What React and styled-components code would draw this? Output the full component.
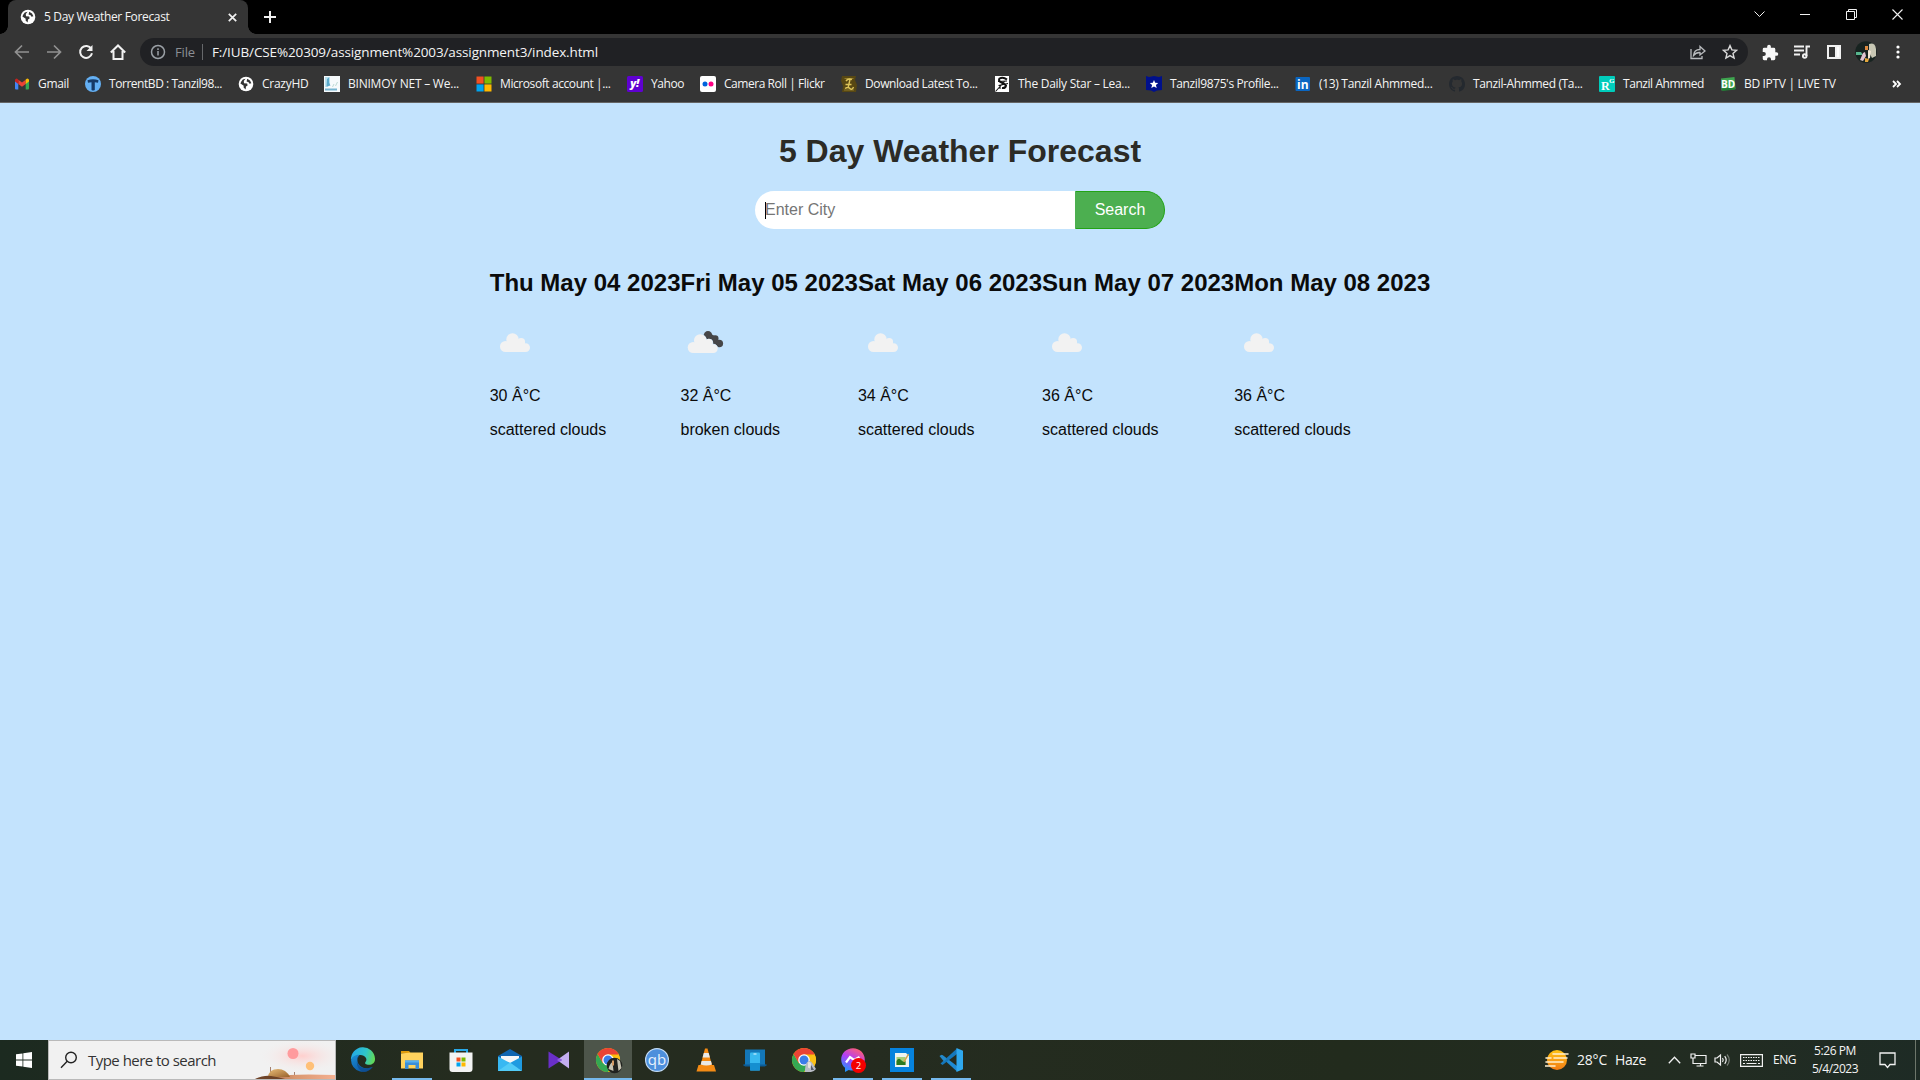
import React, { useLayoutEffect, useRef, useState } from "react";
import styled, { createGlobalStyle, css } from "styled-components";

const UI_FONT = `"Open Sans", "Noto Sans", sans-serif`;
const PAGE_FONT = `"Liberation Sans", Arial, sans-serif`;

const GlobalStyle = createGlobalStyle`
  * { box-sizing: border-box; }
  body { margin: 0; overflow: hidden; background: #c3e3fd; }
`;

const Screen = styled.div`
  width: 1920px;
  height: 1080px;
  display: flex;
  flex-direction: column;
  overflow: hidden;
  font-family: ${UI_FONT};
`;

/* ---------- fitted label ---------- */
const LabelText = styled.span`
  display: inline-block;
  flex: none;
  white-space: pre;
  font-size: ${(p) => p.$size || 12}px;
  line-height: 18px;
  color: ${(p) => p.$color || "#f4f4f4"};
`;

function Label({ width, size, color, children }) {
  const ref = useRef(null);
  const [spacing, setSpacing] = useState(0);
  useLayoutEffect(() => {
    const natural = ref.current.getBoundingClientRect().width;
    setSpacing((width - natural) / children.length);
  }, [width, children]);
  return (
    <LabelText ref={ref} $size={size} $color={color} style={{ letterSpacing: `${spacing}px` }}>
      {children}
    </LabelText>
  );
}

/* ---------- browser chrome ---------- */
const TabStrip = styled.header`
  height: 34px;
  flex: none;
  display: flex;
  background: #000;
  padding-left: 8px;
`;
const Tab = styled.div`
  position: relative;
  width: 240px;
  height: 34px;
  display: flex;
  align-items: center;
  padding: 0 8px 0 12px;
  border-radius: 8px 8px 0 0;
  background: #353535;
  &::before, &::after {
    content: "";
    position: absolute;
    bottom: 0;
    width: 8px;
    height: 8px;
  }
  &::before { left: -8px; background: radial-gradient(circle at 0 0, #000 7.5px, #353535 8px); }
  &::after { right: -8px; background: radial-gradient(circle at 100% 0, #000 7.5px, #353535 8px); }
`;
const TabTitle = styled.div`
  flex: 1;
  display: flex;
  padding-left: 8px;
`;
const Cell = styled.span`
  width: ${(p) => p.$w || 32}px;
  height: ${(p) => p.$h || 34}px;
  flex: none;
  display: flex;
  align-items: center;
  justify-content: center;
`;
const NewTab = styled(Cell)`
  margin-left: 6px;
`;
const WindowControls = styled.div`
  margin-left: auto;
  display: flex;
  height: 28px;
`;
const Toolbar = styled.div`
  height: 36px;
  flex: none;
  display: flex;
  align-items: center;
  background: #353535;
  padding: 0 6px;
`;
const Omnibox = styled.div`
  width: 1608px;
  height: 28px;
  margin-left: 6px;
  display: flex;
  align-items: center;
  border-radius: 14px;
  background: #202124;
`;
const Divider = styled.i`
  width: 1px;
  height: 16px;
  margin: 0 9px 0 7px;
  background: #66686b;
`;
const OmniActions = styled.div`
  margin-left: auto;
  display: flex;
  padding-right: 2px;
`;
const ToolbarActions = styled.div`
  display: flex;
  margin-left: 6px;
`;
const BookmarkBar = styled.nav`
  height: 33px;
  flex: none;
  display: flex;
  align-items: center;
  padding: 0 8px 4px 14px;
  background: #353535;
  border-bottom: 1px solid #656565;
`;
const Bookmark = styled.a`
  width: ${(p) => p.$w}px;
  flex: none;
  display: flex;
  align-items: center;
  gap: 8px;
`;
const Favicon = styled.svg`
  width: 16px;
  height: 16px;
  flex: none;
  display: block;
`;
const More = styled.svg`
  width: 12px;
  height: 12px;
  flex: none;
  margin: 0 9px 0 auto;
`;
const glyphFont = css`
  text { font-family: ${(p) => p.$font || UI_FONT}; text-anchor: middle; }
`;
const Mark = styled(Favicon)`
  ${glyphFont}
`;

const Line = ({ w = 16, h = 16, sw = 1.6, c = "#f1f1f1", children }) => (
  <svg width={w} height={h} viewBox={`0 0 ${w} ${h}`} fill="none" stroke={c} strokeWidth={sw}>
    {children}
  </svg>
);

const Globe = () => (
  <Favicon viewBox="0 0 16 16">
    <circle cx="8" cy="8" r="7.3" fill="#fff" />
    <path d="M7.6 2.8 5.8 5 6 7.2 9.2 7.5 9.6 9.4 8 10.6 7.6 13.6 5.6 11.4 5.7 9.7 2.4 7.6 3.3 5.4 4.8 3.6z" fill="#353535" />
    <path d="M9.2 2.8 12 4.4 13.4 7.2 11.5 7.7 10.6 6.3 8.6 5.6z" fill="#353535" />
  </Favicon>
);

const favicons = {
  gmail: (
    <Favicon viewBox="0 0 16 16">
      <path d="M1 4.5 4.3 7V13.5H2a1 1 0 0 1-1-1z" fill="#4285f4" />
      <path d="M15 4.5 11.7 7v6.5H14a1 1 0 0 0 1-1z" fill="#34a853" />
      <path d="M4.3 3.8 8 6.6l3.7-2.8V8L8 10.8 4.3 8z" fill="#ea4335" />
      <path d="M1 4a1.6 1.6 0 0 1 2.6-1l.7.8V8L1 5.5z" fill="#c5221f" />
      <path d="M15 4a1.6 1.6 0 0 0-2.6-1l-.7.8V8L15 5.5z" fill="#fbbc04" />
    </Favicon>
  ),
  torrent: (
    <Favicon viewBox="0 0 16 16">
      <circle cx="8" cy="8" r="8" fill="#64b0f4" />
      <path d="M2.5 4.2Q8 2.4 13.5 4.2l-.5 2.5-3.2-.5V14q-1.6 1-3.3 0V6.2L3 6.7z" fill="#173a66" />
    </Favicon>
  ),
  globe: <Globe />,
  binimoy: (
    <Favicon viewBox="0 0 16 16">
      <path d="M0 0h16v16H0z" fill="#f6fafc" />
      <path d="M1 1h5v6l-2 4H1z" fill="#b9e0ee" />
      <path d="M3 3 5 1.500v5l1.500 3-4 1z" fill="#5ba9cb" />
      <path d="M8.500 11l1.500-3M11.500 10l2-4" stroke="#bcd9d4" />
      <path d="M1 13.5h12" stroke="#77b5d1" strokeWidth="2" />
    </Favicon>
  ),
  microsoft: (
    <Favicon viewBox="0 0 16 16">
      <path d="M.5.5h7.1v7.1H.5z" fill="#f25022" />
      <path d="M8.4.5h7.1v7.1H8.4z" fill="#7fba00" />
      <path d="M.5 8.4h7.1v7.1H.5z" fill="#00a4ef" />
      <path d="M8.4 8.4h7.1v7.1H8.4z" fill="#ffb900" />
    </Favicon>
  ),
  yahoo: (
    <Mark viewBox="0 0 16 16">
      <rect width="16" height="16" rx="1.5" fill="#5f01d1" />
      <text x="7.8" y="11.4" fontSize="11" fontWeight="800" fontStyle="italic" fill="#fff">y!</text>
    </Mark>
  ),
  flickr: (
    <Favicon viewBox="0 0 16 16">
      <rect width="16" height="16" rx="2" fill="#fff" />
      <circle cx="5" cy="8" r="2.5" fill="#0063dc" />
      <circle cx="11" cy="8" r="2.5" fill="#ff0084" />
    </Favicon>
  ),
  download: (
    <Mark viewBox="0 0 16 16" $font={`"Liberation Serif", serif`}>
      <path d="M1 0h14l-1 4 2 5-1 7H1l1-6-2-5z" fill="#574713" />
      <path d="M3.500 2.500h9M3 14h10" stroke="#8f7a2b" />
      <path d="M5 5q2-3 6-1.500M9 3.500 7 12M4 12.500q3-2 5 0t3.500-1.500M4.500 8.500h6" fill="none" stroke="#ddc45a" strokeWidth="1.400" />
    </Mark>
  ),
  daily: (
    <Favicon viewBox="0 0 16 16">
      <path d="M1 0h14v16H1z" fill="#fff" />
      <path d="M13 3.500Q9 .5 5.500 2.500 4 5 7.500 6.500t4.500 3Q11.500 12.500 8 12" fill="none" stroke="#111" strokeWidth="2" />
      <path d="M4 5.500 13 5M4.500 9.500 14 7.500M1.500 15.500 11 5M6 9v4" stroke="#111" strokeWidth="1.100" />
    </Favicon>
  ),
  badge: (
    <Favicon viewBox="0 0 16 16">
      <path d="M0 0 3 1 8 0l5 1 3-1v14l-5 .6L8 16l-3-1.4L0 14z" fill="#00108c" />
      <path d="m8 4 1.2 2.8 3 .2-2.3 2 .8 3L8 10.400 5.300 12l.8-3-2.300-2 3-.2z" fill="#fff" />
    </Favicon>
  ),
  linkedin: (
    <Mark viewBox="0 0 16 16">
      <rect x=".5" y="1" width="14.500" height="14" rx="1" fill="#0a66c2" />
      <text x="7.800" y="12.500" fontSize="12" fontWeight="700" fill="#fff">in</text>
    </Mark>
  ),
  github: (
    <Favicon viewBox="0 0 16 16">
      <path
        fill="#24292f"
        d="M8 0C3.58 0 0 3.58 0 8c0 3.54 2.29 6.53 5.47 7.59.4.07.55-.17.55-.38 0-.19-.01-.82-.01-1.49-2.01.37-2.53-.49-2.69-.94-.09-.23-.48-.94-.82-1.13-.28-.15-.68-.52-.01-.53.63-.01 1.08.58 1.23.82.72 1.21 1.87.87 2.33.66.07-.52.28-.87.51-1.07-1.78-.2-3.64-.89-3.64-3.95 0-.87.31-1.59.82-2.15-.08-.2-.36-1.02.08-2.12 0 0 .67-.21 2.2.82.64-.18 1.32-.27 2-.27s1.36.09 2 .27c1.53-1.04 2.2-.82 2.2-.82.44 1.1.16 1.92.08 2.12.51.56.82 1.27.82 2.15 0 3.07-1.87 3.75-3.65 3.95.29.25.54.73.54 1.48 0 1.07-.01 1.93-.01 2.2 0 .21.15.46.55.38A8.01 8.01 0 0 0 16 8c0-4.420-3.580-8-8-8z"
      />
    </Favicon>
  ),
  research: (
    <Mark viewBox="0 0 16 16" $font={`"Liberation Serif", serif`}>
      <rect width="16" height="16" rx="1" fill="#00ccbb" />
      <text x="6.300" y="13.500" fontSize="12" fontWeight="700" fill="#fff">R</text>
      <text x="12.700" y="6.500" fontSize="7" fontWeight="700" fill="#fff">G</text>
    </Mark>
  ),
  iptv: (
    <Mark viewBox="0 0 16 16">
      <path d="M1 2.500 14.500 1 15.500 13 1.500 14.500z" fill="#3fa650" />
      <path d="m1.500 12.500 13-1 1 2-13 1.500z" fill="#227a35" />
      <text x="8" y="12" fontSize="10" fontWeight="700" fill="#fff">BD</text>
    </Mark>
  ),
};

const bookmarks = [
  { icon: "gmail", text: "Gmail", w: 71, lw: 31 },
  { icon: "torrent", text: "TorrentBD : Tanzil98...", w: 153, lw: 113 },
  { icon: "globe", text: "CrazyHD", w: 86, lw: 46.5 },
  { icon: "binimoy", text: "BINIMOY NET – We...", w: 152, lw: 111 },
  { icon: "microsoft", text: "Microsoft account |...", w: 151, lw: 110.5 },
  { icon: "yahoo", text: "Yahoo", w: 73, lw: 33 },
  { icon: "flickr", text: "Camera Roll | Flickr", w: 141, lw: 100.5 },
  { icon: "download", text: "Download Latest To...", w: 153, lw: 112.5 },
  { icon: "daily", text: "The Daily Star – Lea...", w: 152, lw: 112 },
  { icon: "badge", text: "Tanzil9875's Profile...", w: 149, lw: 108.5 },
  { icon: "linkedin", text: "(13) Tanzil Ahmmed...", w: 154, lw: 113.5 },
  { icon: "github", text: "Tanzil-Ahmmed (Ta...", w: 150, lw: 109.5 },
  { icon: "research", text: "Tanzil Ahmmed", w: 121, lw: 81 },
  { icon: "iptv", text: "BD IPTV | LIVE TV", w: 130, lw: 91.5 },
];

/* ---------- weather page ---------- */
const Page = styled.main`
  flex: 1;
  min-height: 0;
  display: flex;
  flex-direction: column;
  align-items: center;
  background: #c3e3fd;
  font-family: ${PAGE_FONT};
  color: #0b0b0b;
`;
const Title = styled.h1`
  margin: 29px 0 21px;
  font-size: 32px;
  line-height: 38px;
  color: #2b2b26;
`;
const SearchForm = styled.form`
  display: flex;
  height: 38px;
`;
const CityField = styled.div`
  width: 320px;
  display: flex;
  align-items: center;
  padding-left: 10px;
  border-radius: 20px 0 0 20px;
  background: #fff;
  color: #757575;
  font-size: 16px;
`;
const Caret = styled.i`
  width: 1px;
  height: 17px;
  margin-right: -1px;
  background: #000;
`;
const SearchButton = styled.button`
  width: 90px;
  padding: 0;
  border: 1px solid #23a314;
  border-left-color: #4caf50;
  border-radius: 0 20px 20px 0;
  background: #4caf50;
  color: #fff;
  font: 16px ${PAGE_FONT};
`;
const Forecast = styled.section`
  display: flex;
  justify-content: center;
  margin-top: 20px;
`;
const DayHeading = styled.h2`
  margin: 20px 0;
  font-size: 24px;
  line-height: 28px;
  white-space: nowrap;
`;
const WeatherIcon = styled.svg`
  display: block;
  width: 50px;
  height: 50px;
`;
const Reading = styled.p`
  margin: 16px 0;
  font-size: 16px;
  line-height: 18px;
`;
const IconSlot = styled.div`
  height: 54px;
`;

const days = [
  { date: "Thu May 04 2023", temp: 30, sky: "scattered clouds" },
  { date: "Fri May 05 2023", temp: 32, sky: "broken clouds" },
  { date: "Sat May 06 2023", temp: 34, sky: "scattered clouds" },
  { date: "Sun May 07 2023", temp: 36, sky: "scattered clouds" },
  { date: "Mon May 08 2023", temp: 36, sky: "scattered clouds" },
];

const CloudBody = () => (
  <>
    <circle cx="15.500" cy="29.500" r="5.500" />
    <circle cx="22.500" cy="22.400" r="6.200" />
    <circle cx="31.200" cy="25" r="3.900" />
    <circle cx="35.600" cy="30.600" r="4.400" />
    <path d="M15.500 25h17l3 2v8h-20z" />
  </>
);

const Cloud = ({ broken }) => (
  <WeatherIcon viewBox="0 0 50 50">
    {broken && (
      <g fill="#464648">
        <circle cx="28" cy="18.500" r="4.400" />
        <circle cx="35.300" cy="21.500" r="3.200" />
        <circle cx="39.300" cy="26.500" r="3.800" />
        <path d="m28 16 7 3 4 5v6l-6-3-6-6z" />
      </g>
    )}
    <g transform={broken ? "translate(-2.3 1)" : undefined}>
      {broken && (
        <g fill="#c3e3fd" stroke="#c3e3fd" strokeWidth="1"><CloudBody /></g>
      )}
      <g fill="#f2f2f2"><CloudBody /></g>
    </g>
  </WeatherIcon>
);

/* ---------- taskbar ---------- */
const Taskbar = styled.footer`
  height: 40px;
  flex: none;
  display: flex;
  background: linear-gradient(90deg, #1c2a20, #252c1f 25%, #252c20 45%, #222b1d 70%, #222c22 90%, #1e2b25);
`;
const SearchBox = styled.div`
  width: 288px;
  display: flex;
  align-items: center;
  border: 1px solid #b9b9b9;
  background: #f1f1f1;
  overflow: hidden;
`;
const SearchGlyph = styled.div`
  width: 39px;
  padding-left: 11px;
  display: flex;
`;
const Scene = styled.svg`
  width: 80px;
  height: 38px;
  margin-left: auto;
`;
const Apps = styled.div`
  display: flex;
  padding-left: 2px;
`;
const AppSlot = styled.div`
  width: 49px;
  display: flex;
  justify-content: center;
`;
const AppTile = styled.div`
  width: ${(p) => (p.$active ? 48 : 40)}px;
  height: 40px;
  flex: none;
  display: flex;
  align-items: center;
  justify-content: center;
  background: ${(p) => (p.$active ? "#4d554a" : "transparent")};
  border-bottom: 2px solid ${(p) => (p.$running ? "#76b9ed" : "transparent")};
  padding-top: 2px;
`;
const AppIcon = styled.svg`
  width: 24px;
  height: 24px;
  display: block;
  overflow: visible;
  ${glyphFont}
`;
const Tray = styled.div`
  margin-left: auto;
  display: flex;
  align-items: center;
`;
const Weather = styled.div`
  display: flex;
  align-items: center;
  margin-right: 16px;
`;
const Gap = styled.span`
  width: ${(p) => p.$w}px;
`;
const Clock = styled.div`
  width: 68px;
  display: flex;
  flex-direction: column;
  align-items: center;
`;
const ShowDesktop = styled.i`
  width: 5px;
  height: 40px;
  border-left: 1px solid #6d766b;
`;

const ChromeMark = () => (
  <>
    <circle cx="12" cy="12" r="12" fill="#fbbc04" />
    <path d="M12 12 22.400 6A12 12 0 0 1 12 24z" fill="#fbc116" />
    <path d="M1.600 6A12 12 0 0 0 12 24l5.200-9L12 12 6.800 15z" fill="#34a853" />
    <path d="M12 6.500h10.700A12 12 0 0 0 1.600 6l5.200 9z" fill="#ea4335" />
    <circle cx="12" cy="12" r="5.800" fill="#fff" />
    <circle cx="12" cy="12" r="4.500" fill="#3b7de8" />
  </>
);

const apps = [
  {
    id: "edge",
    art: (
      <>
        <defs>
          <linearGradient id="edgeTop" x1="0" y1=".3" x2="1" y2=".5"><stop stopColor="#23a7e9" /><stop offset=".6" stopColor="#2fc6c8" /><stop offset="1" stopColor="#62d957" /></linearGradient>
          <linearGradient id="edgeLow" x1="0" y1="0" x2=".6" y2="1"><stop stopColor="#1b8fd8" /><stop offset="1" stopColor="#0c59a4" /></linearGradient>
        </defs>
        <path d="M0 12a12 12 0 0 1 24-1.500c.3 4-2.500 6.300-6 6.300-3.200 0-4.700-1.300-3.500-2.700 2.500-3-.5-7-5-7C5 7.100 1.500 9.500 0 12z" fill="url(#edgeTop)" />
        <path d="M0 12c1-3.500 5-6 9-5.200-3 1.600-3.200 6-1.500 9.200 2.400 4.200 8.500 5.500 14.300 2.700A12 12 0 0 1 0 12z" fill="url(#edgeLow)" />
        <path d="M9.500 7C5.500 8.500 5 14 8.500 18c3 3 8.500 3.200 13.300.7A12 12 0 0 1 12 24C6 21 3 13 9.500 7z" fill="#104a8c" opacity=".7" />
      </>
    ),
  },
  {
    id: "explorer", running: true,
    art: (
      <>
        <path d="M1 3h8l2 2.500H1z" fill="#e09b0c" />
        <path d="M1 5.500 11 4.500h12v16H1z" fill="#ffd25e" />
        <path d="M5 12.500h14V21h-3.500v-4h-7v4H5z" fill="#3b8ed8" />
        <path d="M5 12.500h14v2H5z" fill="#58b0ef" />
      </>
    ),
  },
  {
    id: "store",
    art: (
      <>
        <path d="M6 5V2h12v3" fill="none" stroke="#29a9e8" strokeWidth="2" />
        <path d="M.5 4.500h23V21a3 3 0 0 1-3 3h-17a3 3 0 0 1-3-3z" fill="#f3f3f3" />
        <path d="M7.500 9.500h4v4h-4z" fill="#f25022" /><path d="M12.500 9.500h4v4h-4z" fill="#7fba00" />
        <path d="M7.500 14.500h4v4h-4z" fill="#00a4ef" /><path d="M12.500 14.500h4v4h-4z" fill="#ffb900" />
      </>
    ),
  },
  {
    id: "mail",
    art: (
      <>
        <path d="M0 8 12 1l12 7v5H0z" fill="#0f65b0" />
        <path d="M3 8h18v4l-9 5-9-5z" fill="#f5f6f7" />
        <path d="M0 8.500 12 15 24 23H0z" fill="#38b8f2" />
        <path d="M24 8.500V23L9 13.800 12 15z" fill="#1f9ae0" />
        <path d="M0 23 12 14.500 24 23z" fill="#52cbf7" />
      </>
    ),
  },
  {
    id: "blend",
    art: (
      <>
        <path d="M22 3.500v17L10 12z" fill="#c3aef0" />
        <path d="M1.500 3.500 15 12 1.500 20.500z" fill="#6a2fc8" />
        <path d="M12.300 10.300 15 12 12.300 13.700 10 12z" fill="#8f63df" />
      </>
    ),
  },
  {
    id: "chrome", running: true, active: true,
    art: (
      <>
        <ChromeMark />
        <circle cx="18.500" cy="17.500" r="7.800" fill="#20221f" />
        <path d="M12.500 21c1-4 2-6 4-7l1 9zM21 11l3 2 1.500 7-3 3z" fill="#c6c3b3" />
        <path d="M16 12.500h2v5h-2z" fill="#d49b65" />
      </>
    ),
  },
  {
    id: "qbittorrent",
    art: (
      <>
        <circle cx="12" cy="12" r="11.400" fill="#4d8fdc" stroke="#c3dcf6" strokeWidth="1.200" />
        <text x="12" y="16.500" fontSize="15" fill="#e9f2fc">qb</text>
      </>
    ),
  },
  {
    id: "vlc",
    art: (
      <>
        <path d="M4.500 17h15.500l2 6.500H2.500z" fill="#f48b15" />
        <path d="M11 .5h2.500L18.500 19q-6.500 3-12.500 0z" fill="#f58a12" />
        <path d="m9.800 5 4.900 0 1.200 4.500H8.600zM7.600 13h9.400l.9 3.500q-5.600 2.200-11.200 0z" fill="#e9e9e7" />
      </>
    ),
  },
  {
    id: "device",
    art: (
      <>
        <path d="M2 1.500h20v15l2 1H0l2-1z" fill="#1377b8" />
        <path d="M0 16.500h24l-2 2H2z" fill="#0b5c98" />
        <rect x="7" y="4.500" width="10" height="18" rx="1" fill="#38b9f0" />
        <path d="M7 15h10v7.500H7z" fill="#168fd0" />
        <path d="M10.500 6h3" stroke="#e7f8ff" />
      </>
    ),
  },
  {
    id: "chrome-2",
    art: (
      <>
        <ChromeMark />
        <path d="M13 24c0-6 1-10 4-11 3 0 4 3 7 8a7 7 0 0 1-5 3z" fill="#b8bcc5" />
        <path d="M16 14.500c2-1 3 0 3 2l-1 4-2-1z" fill="#e8e3dd" />
        <path d="m19 17 3 5h-3z" fill="#525b6c" />
      </>
    ),
  },
  {
    id: "messenger", running: true,
    art: (
      <>
        <defs>
          <linearGradient id="msg" x1=".7" y1="0" x2=".2" y2="1"><stop stopColor="#ff5f72" /><stop offset=".45" stopColor="#b43df5" /><stop offset="1" stopColor="#159bff" /></linearGradient>
        </defs>
        <path d="M12 .2C5.200.2.200 5.200.200 11.500c0 3.400 1.400 6.300 3.800 8.300V24l3.700-2c1.300.4 2.800.6 4.300.6 6.800 0 11.800-4.900 11.800-11.100S18.800.2 12 .2z" fill="url(#msg)" />
        <path d="m5 14.500 4-5.500 4 3 5.500-3" fill="none" stroke="#fff" strokeWidth="2.200" />
        <circle cx="17.500" cy="17.500" r="7.500" fill="#f40000" />
        <text x="17.500" y="20.800" fontSize="9.500" fill="#fff">2</text>
      </>
    ),
  },
  {
    id: "viewer", running: true,
    art: (
      <>
        <path d="M0 0h24v24H0z" fill="#0683de" />
        <path d="M5 5h11l3 3v11H5z" fill="#eef4ef" />
        <path d="M6.500 9h9v8h-9z" fill="#a9cf7a" />
        <path d="M6.500 13q2-4 4.500-1t4.500 1v4h-9z" fill="#2c7a20" />
        <path d="m18.500 6-4.500 8" stroke="#d9a14a" strokeWidth="1.500" />
      </>
    ),
  },
  {
    id: "vscode", running: true,
    art: (
      <>
        <path d="m1.500 8.500 2-1.500L18 18v5.500z" fill="#1f8ad2" />
        <path d="m1.500 15.500 2 1.500L18 6V.5z" fill="#1577bb" />
        <path d="M17.500 0 24 2.800v18.400L17.500 24z" fill="#2fa8ee" />
        <path d="M.5 8 2.500 6.800 7.500 11 5 13.500z" fill="#2489ca" />
      </>
    ),
  },
];

export default function App() {
  return (
    <Screen>
      <GlobalStyle />
      <TabStrip>
        <Tab>
          <Globe />
          <TabTitle><Label width={125.500}>5 Day Weather Forecast</Label></TabTitle>
          <Cell $w={15}><Line w={9} h={9} sw={1.7}><path d="m.8.800 7.400 7.400m0-7.400L.8 8.200" /></Line></Cell>
        </Tab>
        <NewTab $w={32}><Line w={12} h={12} sw={2}><path d="M6 0v12M0 6h12" /></Line></NewTab>
        <WindowControls>
          <Cell $w={46} $h={28}><Line w={11} h={7} sw={1}><path d="m.5.500 5 5 5-5" /></Line></Cell>
          <Cell $w={46} $h={28}><Line w={10} h={3} sw={1}><path d="M0 1.500h10" /></Line></Cell>
          <Cell $w={46} $h={28}><Line w={11} h={11} sw={1}><path d="M.5 2.500h8v8h-8zM2.500 2.500v-2h8v8h-2" /></Line></Cell>
          <Cell $w={46} $h={28}><Line w={11} h={11} sw={1.1}><path d="m.5.500 10 10m0-10-10 10" /></Line></Cell>
        </WindowControls>
      </TabStrip>

      <Toolbar>
        <Cell><Line c="#919191" sw={1.7}><path d="M15 8H2M8 1.500 1.500 8 8 14.500" /></Line></Cell>
        <Cell><Line c="#919191" sw={1.7}><path d="M1 8h13M8 1.500 14.500 8 8 14.500" /></Line></Cell>
        <Cell><Line sw={2}><path d="M13.300 4.800A6 6 0 1 0 14 9.300" /><path d="M14.500 1v6h-6z" fill="#f1f1f1" stroke="none" /></Line></Cell>
        <Cell><Line sw={2}><path d="M.8 8.500 8 1.500l7.200 7M3.500 7v8h9V7" /></Line></Cell>
        <Omnibox>
          <Cell $w={35}>
            <Line c="#9aa0a6" sw={1.500}><circle cx="8" cy="8" r="6.500" /><path d="M8 7v4.500M8 4.300V6" /></Line>
          </Cell>
          <Label width={20} size={13} color="#8b8f94">File</Label>
          <Divider />
          <Label width={386} size={13.500}>F:/IUB/CSE%20309/assignment%2003/assignment3/index.html</Label>
          <OmniActions>
            <Cell><Line c="#b9bbbe" sw={1.300}><path d="M1 5v9.500h11V12M3.500 11.500Q4 5.500 10 5.500V2.500l5 4.500-5 4V8.500Q6 8.300 3.500 11.500z" /></Line></Cell>
            <Cell><Line c="#dadada" sw={1.400}><path d="m8 1.600 1.900 4.300 4.700.4-3.600 3.100 1.100 4.600L8 11.600 3.900 14 5 9.400 1.400 6.300l4.700-.4z" /></Line></Cell>
          </OmniActions>
        </Omnibox>
        <ToolbarActions>
          <Cell>
            <svg width="17" height="17" viewBox="1.500 0 22 23" fill="#f7f7f7">
              <path d="M20.500 11H19V7a2 2 0 0 0-2-2h-4V3.500a2.500 2.500 0 0 0-5 0V5H4a2 2 0 0 0-2 2v3.800h1.500a2.700 2.700 0 0 1 0 5.400H2V20a2 2 0 0 0 2 2h3.800v-1.500a2.700 2.700 0 0 1 5.400 0V22H17a2 2 0 0 0 2-2v-4h1.500a2.500 2.500 0 0 0 0-5z" />
            </svg>
          </Cell>
          <Cell><Line sw={1.900}><path d="M0 2.500h10M0 6.500h10M0 10.500h6M12.500 12V2.500H16" /><circle cx="10.700" cy="12" r="1.800" /></Line></Cell>
          <Cell><Line w={14} h={14} sw={2}><path d="M1 1h12v12H1z" /><path d="M9 1h4v12H9z" fill="#fff" /></Line></Cell>
          <Cell>
            <svg width="22" height="22" viewBox="0 0 22 22">
              <circle cx="11" cy="11" r="10.800" fill="#172320" />
              <path d="M1 14h7l-2-3H1z" fill="#57b58d" />
              <path d="M14 3q6-2 7 5v7l-4 2-3-6z" fill="#c8c7b4" />
              <path d="M10 5h3v4h-3z" fill="#de8a3f" />
              <path d="m5 19 3-7 2-1 1 4-3 5z" fill="#e0c3d0" />
              <path d="m13 9 3 1-1 7-2 1z" fill="#f0e4d2" />
              <path d="m10 17 4 1-1 3h-3z" fill="#e3a53d" />
            </svg>
          </Cell>
          <Cell>
            <svg width="4" height="14" viewBox="0 0 4 14" fill="#fff"><circle cx="2" cy="2" r="1.600" /><circle cx="2" cy="7" r="1.600" /><circle cx="2" cy="12" r="1.600" /></svg>
          </Cell>
        </ToolbarActions>
      </Toolbar>

      <BookmarkBar>
        {bookmarks.map((b) => (
          <Bookmark key={b.text} $w={b.w}>
            {favicons[b.icon]}
            <Label width={b.lw}>{b.text}</Label>
          </Bookmark>
        ))}
        <More viewBox="0 0 12 12" fill="none" stroke="#fff" strokeWidth="1.800"><path d="m2 3 3 3-3 3m4-6 3 3-3 3" /></More>
      </BookmarkBar>

      <Page>
        <Title>5 Day Weather Forecast</Title>
        <SearchForm>
          <CityField><Caret />Enter City</CityField>
          <SearchButton type="button">Search</SearchButton>
        </SearchForm>
        <Forecast>
          {days.map((d) => (
            <article key={d.date}>
              <DayHeading>{d.date}</DayHeading>
              <IconSlot><Cloud broken={d.sky === "broken clouds"} /></IconSlot>
              <Reading>{d.temp} Â°C</Reading>
              <Reading>{d.sky}</Reading>
            </article>
          ))}
        </Forecast>
      </Page>

      <Taskbar>
        <Cell $w={48} $h={40}>
          <svg width="16" height="16" viewBox="0 0 16 16" fill="#fff">
            <path d="M0 2.300 6.500 1.400v6.200H0zM7.300 1.300 16 0v7.600H7.300zM0 8.400h6.500v6.200L0 13.700zM7.300 8.400H16V16l-8.700-1.300z" />
          </svg>
        </Cell>
        <SearchBox>
          <SearchGlyph>
            <Line w={18} h={18} c="#222" sw={1.400}><circle cx="11" cy="6.500" r="5.300" /><path d="M7.200 10.300 1 16.700" /></Line>
          </SearchGlyph>
          <Label width={128} size={15} color="#333">Type here to search</Label>
          <Scene viewBox="0 0 80 38">
            <defs>
              <radialGradient id="glow"><stop stopColor="#ffcfcd" /><stop offset="1" stopColor="#f1f1f1" stopOpacity="0" /></radialGradient>
              <linearGradient id="sand" x1="0" x2="1"><stop stopColor="#8c5a3c" /><stop offset=".5" stopColor="#d9976f" /><stop offset="1" stopColor="#f4b091" /></linearGradient>
              <linearGradient id="rock" x1="0" x2="1" y2="1"><stop stopColor="#e8bd78" /><stop offset="1" stopColor="#99622c" /></linearGradient>
            </defs>
            <ellipse cx="47" cy="15" rx="44" ry="17" fill="url(#glow)" />
            <circle cx="38" cy="12.500" r="5.500" fill="#ff9b9d" />
            <circle cx="55" cy="25" r="4.200" fill="#ffc078" />
            <path d="M15.500 26v10M39.500 31v6" stroke="#a5806f" />
            <path d="M0 38q20-3 35-4t45 0v4z" fill="url(#sand)" />
            <path d="M13 36q1-8 10-8 8 0 12 8z" fill="url(#rock)" />
            <path d="M0 38q9-4 16-3t14 3z" fill="#6e4327" />
          </Scene>
        </SearchBox>
        <Apps>
          {apps.map((a) => (
            <AppSlot key={a.id}>
              <AppTile $running={a.running} $active={a.active}>
                <AppIcon viewBox="0 0 24 24">{a.art}</AppIcon>
              </AppTile>
            </AppSlot>
          ))}
        </Apps>
        <Tray>
          <Weather>
            <svg width="24" height="20" viewBox="0 0 24 20">
              <defs><linearGradient id="haze" x2="0" y2="1"><stop stopColor="#ffc414" /><stop offset="1" stopColor="#f27c16" /></linearGradient></defs>
              <circle cx="12" cy="10" r="10" fill="url(#haze)" />
              <path d="M8 4h15M1 8h5m3 0h7M1 12h11m2-4h8M0 16h10m2-4h6" stroke="#fff0cf" strokeWidth="1.600" strokeLinecap="round" />
            </svg>
            <Gap $w={8} />
            <Label width={30} size={14}>28°C</Label>
            <Gap $w={8} />
            <Label width={31} size={14}>Haze</Label>
          </Weather>
          <Cell $w={24}><Line w={13} h={8} sw={1.300}><path d="m.8 7.200 5.700-6 5.700 6" /></Line></Cell>
          <Cell $w={24}><Line w={17} h={14} sw={1.200}><path d="M5 2.500h11v8H5M1 1h4v4H1zM3 5v5.500h2M10.500 10.500V13M6.500 13h7" /></Line></Cell>
          <Cell $w={24}><Line w={17} h={14} sw={1.200}><path d="M1 5h2l3.500-3v10L3 9H1zM8.500 5q1.500 2 0 4M10.700 3.200q3 3.800 0 7.600" /><path d="M13 1.500q4.500 5.500 0 11" stroke="#777e76" /></Line></Cell>
          <Cell $w={34}><Line w={23} h={13} sw={1.200}><path d="M.6.600h21.800v11.800H.6z" /><path d="M3 3.500h17M3 6.500h17" strokeDasharray="1.500 1" /><path d="M3 9.500h2m1.500 0h10m1.500 0h2" /></Line></Cell>
          <Gap $w={5} />
          <Label width={23} size={12}>ENG</Label>
          <Gap $w={5} />
          <Clock>
            <Label width={42} size={12}>5:26 PM</Label>
            <Label width={46} size={12}>5/4/2023</Label>
          </Clock>
          <Cell $w={36}><Line w={17} h={17} sw={1.300}><path d="M1 1h15v11.500h-5l-2.500 3-2.500-3H1z" /></Line></Cell>
          <Gap $w={10} />
          <ShowDesktop />
        </Tray>
      </Taskbar>
    </Screen>
  );
}
